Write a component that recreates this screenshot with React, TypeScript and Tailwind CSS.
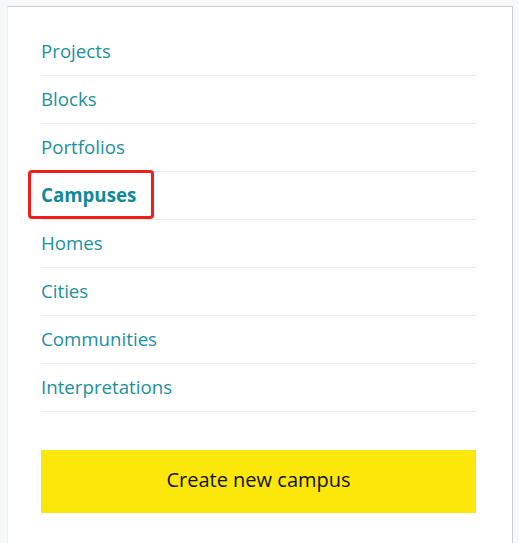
const items = [
  'Projects',
  'Blocks',
  'Portfolios',
  'Campuses',
  'Homes',
  'Cities',
  'Communities',
  'Interpretations',
]

export default function App() {
  return (
    <div
      className="min-h-[543px] bg-[#f7f8fa] pt-[6px] pr-[6px]"
      style={{ fontFamily: '"Open Sans", sans-serif' }}
    >
      <div className="ml-[7px] min-h-[537px] border-t border-r border-l border-t-[#cccccc] border-r-[#cccccc] border-l-[#ececec] bg-white pl-[33px] pr-[36px] pt-[21px]">
        <ul>
          {items.map((item) => (
            <li
              key={item}
              className="flex h-12 items-center border-b border-[#ebebeb] text-[18.7px] text-[#1a90a3]"
            >
              {item === 'Campuses' ? (
                <span className="relative font-bold text-[#0f8a9c]">
                  {item}
                  <span className="absolute -top-[11px] -bottom-[9px] -left-[13px] -right-[18px] rounded-[4px] border-[3px] border-[#f21d16]" />
                </span>
              ) : (
                <span>{item}</span>
              )}
            </li>
          ))}
        </ul>
        <button className="mt-[38px] flex h-[63px] w-full items-center justify-center bg-[#fce70a] pb-[3px] text-[20px] text-[#111]">
          Create new campus
        </button>
      </div>
    </div>
  )
}
